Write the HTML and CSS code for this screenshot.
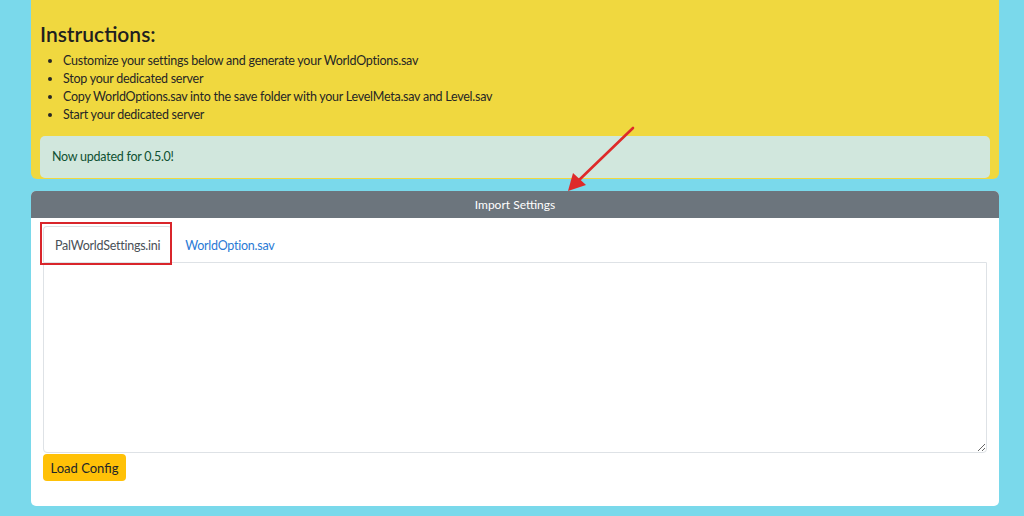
FILE: index.html
```html
<!DOCTYPE html>
<html lang="en">
<head>
    <meta charset="UTF-8">
    <meta name="viewport" content="width=device-width, initial-scale=1.0">
    <title>Palworld World Options</title>
    <link rel="stylesheet" href="styles.css">
</head>
<body>
    <div class="page">
        <div class="instructions">
            <h2>Instructions:</h2>
            <ul>
                <li>Customize your settings below and generate your WorldOptions.sav</li>
                <li>Stop your dedicated server</li>
                <li>Copy WorldOptions.sav into the save folder with your LevelMeta.sav and Level.sav</li>
                <li>Start your dedicated server</li>
            </ul>
            <div class="alert">Now updated for 0.5.0!</div>
        </div>

        <div class="card">
            <div class="card-header">Import Settings</div>
            <div class="card-body">
                <div class="tabs">
                    <a href="#" class="tab active">PalWorldSettings.ini<span class="highlight"></span></a>
                    <a href="#" class="tab">WorldOption.sav</a>
                </div>
                <textarea class="config-input"></textarea>
                <button class="load-btn">Load Config</button>
            </div>
        </div>

        <svg class="arrow" width="80" height="80" viewBox="0 0 80 80">
            <line x1="72" y1="3" x2="16" y2="57" stroke="#de2a2a" stroke-width="2.6" stroke-linecap="round"/>
            <polygon points="7,66 12,48 25,60" fill="#de2a2a"/>
        </svg>
    </div>
</body>
</html>
```

FILE: styles.css
```css
body {
    font-family: Lato, "Open Sans", sans-serif;
    margin: 0;
    padding: 0;
    background-color: #7ad9eb;
    color: #212529;
}
.page {
    position: relative;
    width: 968px;
    margin-left: 31px;
}
.instructions {
    background-color: #f0d83f;
    padding: 21px 9px 1px 9px;
    border-radius: 0 0 6px 6px;
}
.instructions h2 {
    margin: 0;
    font-size: 21px;
    font-weight: 600;
    line-height: 26px;
    color: #1f1f1f;
}
.instructions ul {
    margin: 5px 0 12px 0;
    padding-left: 23px;
    font-size: 12.5px;
    letter-spacing: -0.25px;
    line-height: 18px;
    color: #262626;
}
.alert {
    background-color: #d1e7dd;
    color: #0f5132;
    font-size: 12.5px;
    letter-spacing: -0.25px;
    padding: 12px 12px;
    line-height: 18px;
    border-radius: 5px;
}
.card {
    margin-top: 12px;
    background-color: white;
    border-radius: 5px;
}
.card-header {
    background-color: #6c757d;
    color: white;
    text-align: center;
    font-size: 12px;
    height: 27px;
    line-height: 27px;
    border-radius: 5px 5px 0 0;
}
.card-body {
    padding: 8px 12px 25px 12px;
}
.tabs {
    display: flex;
    height: 36px;
}
.tab {
    position: relative;
    display: block;
    padding: 0 11px;
    line-height: 38px;
    font-size: 12.5px;
    letter-spacing: -0.25px;
    text-decoration: none;
    color: #2a7ad5;
    border: 1px solid transparent;
    border-bottom: none;
    border-radius: 4px 4px 0 0;
}
.tab.active {
    color: #495057;
    border-color: #dee2e6;
    margin-right: 1px;
}
.highlight {
    position: absolute;
    left: -4px;
    top: -5px;
    right: -1px;
    bottom: -3px;
    border: 2.5px solid #d9252b;
}
.config-input {
    display: block;
    box-sizing: border-box;
    width: 944px;
    height: 191px;
    margin: 0;
    border: 1px solid #dee2e6;
    border-radius: 0 0 4px 4px;
}
.load-btn {
    margin-top: 1px;
    background-color: #ffc107;
    border: none;
    border-radius: 4px;
    width: 83px;
    height: 27px;
    font-family: Lato, "Open Sans", sans-serif;
    font-size: 13px;
    color: #212529;
    padding: 0;
}
.arrow {
    position: absolute;
    left: 530px;
    top: 125px;
}
```
